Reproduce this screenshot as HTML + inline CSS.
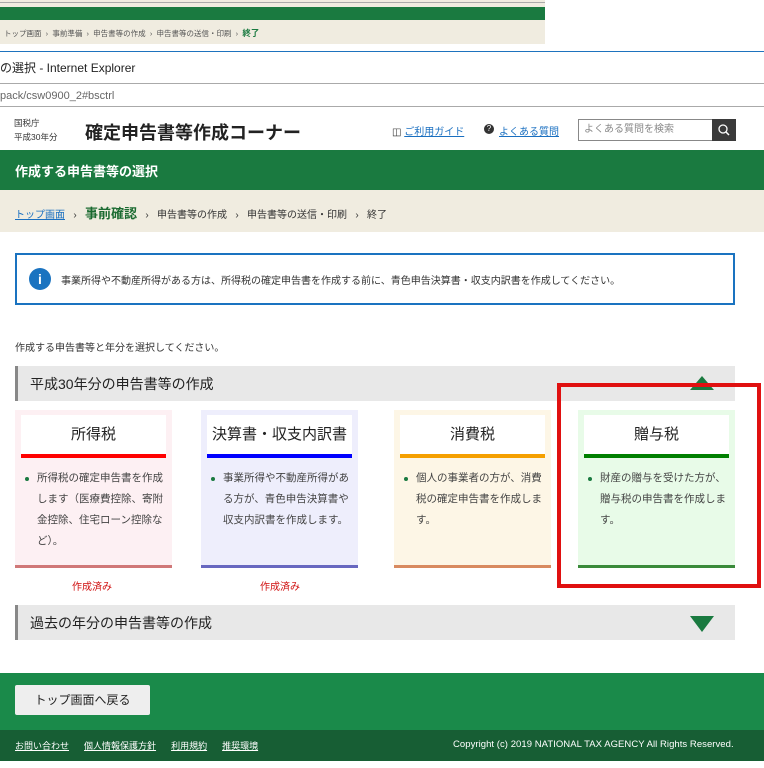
<!DOCTYPE html>
<html><head><meta charset="utf-8"><style>
*{margin:0;padding:0;box-sizing:border-box}
body{width:764px;height:768px;position:relative;background:#fff;font-family:"Liberation Sans","Noto Sans CJK JP",sans-serif;color:#333;overflow:hidden}
.a{position:absolute;white-space:nowrap}
.card{position:absolute;top:410px;width:157px;height:158px}
.card .t{position:absolute;left:6px;top:5px;width:145px;height:40px;background:#fff;text-align:center;font-size:15px;line-height:40px;color:#222}
.card .bar{position:absolute;left:6px;top:44px;width:145px;height:4px}
.card .d{position:absolute;left:10px;top:58px;width:140px;font-size:10.5px;line-height:21px;color:#444;padding-left:12px;white-space:normal}
.card .d:before{content:"";position:absolute;left:0;top:9px;width:4px;height:4px;border-radius:2px;background:#1a7a40}
.card .bt{position:absolute;left:0;bottom:0;width:157px;height:3px}
.u{text-decoration:underline}
</style></head><body>
<div class="a" style="left:0;top:0;width:545px;height:44px;background:#f0ece0"></div>
<div class="a" style="left:0;top:2px;width:545px;height:1px;background:#aaa"></div>
<div class="a" style="left:0;top:7px;width:545px;height:13px;background:#1a7a40"></div>
<div class="a" style="left:4px;top:27px;font-size:7.5px;color:#555">トップ画面 &nbsp;›&nbsp; 事前準備 &nbsp;›&nbsp; 申告書等の作成 &nbsp;›&nbsp; 申告書等の送信・印刷 &nbsp;›&nbsp; <b style="color:#1a7a40;font-size:8.5px">終了</b></div>
<div class="a" style="left:0;top:51px;width:764px;height:1px;background:#1e73be"></div>
<div class="a" style="left:0;top:59px;font-size:12px;color:#222">の選択 - Internet Explorer</div>
<div class="a" style="left:0;top:83px;width:764px;height:1px;background:#aaa"></div>
<div class="a" style="left:0;top:90px;font-size:11px;color:#666">pack/csw0900_2#bsctrl</div>
<div class="a" style="left:0;top:106px;width:764px;height:1px;background:#aaa"></div>
<div class="a" style="left:14px;top:116px;font-size:8.5px;line-height:14px;color:#333">国税庁<br>平成30年分</div>
<div class="a" style="left:85px;top:119px;font-size:18px;font-weight:bold;color:#222">確定申告書等作成コーナー</div>
<div class="a" style="left:392px;top:123px;font-size:10px;color:#333">&#9707; <span class="u" style="color:#1a6fc0">ご利用ガイド</span></div>
<div class="a" style="left:484px;top:124px;width:10px;height:10px;border-radius:5px;background:#333;color:#fff;font-size:8px;line-height:10px;text-align:center">?</div>
<div class="a u" style="left:499px;top:123px;font-size:10px;color:#1a6fc0">よくある質問</div>
<div class="a" style="left:578px;top:119px;width:135px;height:22px;border:1px solid #888;font-size:10px;line-height:20px;color:#888;padding-left:5px">よくある質問を検索</div>
<div class="a" style="left:712px;top:119px;width:24px;height:22px;background:#3a3a3a"><svg width="24" height="22"><circle cx="11" cy="10" r="4" stroke="#fff" fill="none" stroke-width="1.3"/><line x1="14" y1="13" x2="17" y2="16" stroke="#fff" stroke-width="1.5"/></svg></div>
<div class="a" style="left:0;top:150px;width:764px;height:40px;background:#1a7a40"></div>
<div class="a" style="left:15px;top:161px;font-size:13px;font-weight:bold;color:#fff">作成する申告書等の選択</div>
<div class="a" style="left:0;top:190px;width:764px;height:42px;background:#f0ece0"></div>
<div class="a" style="left:15px;top:203px;font-size:10px;color:#333"><span class="u" style="color:#1a6fc0">トップ画面</span> &nbsp;&nbsp;›&nbsp;&nbsp; <b style="font-size:13px;color:#1a6a30">事前確認</b> &nbsp;&nbsp;›&nbsp;&nbsp; 申告書等の作成 &nbsp;&nbsp;›&nbsp;&nbsp; 申告書等の送信・印刷 &nbsp;&nbsp;›&nbsp;&nbsp; 終了</div>
<div class="a" style="left:15px;top:253px;width:720px;height:52px;border:2px solid #1a73c0"></div>
<div class="a" style="left:29px;top:268px;width:22px;height:22px;border-radius:11px;background:#1a73c0;color:#fff;font-size:14px;font-weight:bold;line-height:22px;text-align:center">i</div>
<div class="a" style="left:61px;top:272px;font-size:10px;color:#333">事業所得や不動産所得がある方は、所得税の確定申告書を作成する前に、青色申告決算書・収支内訳書を作成してください。</div>
<div class="a" style="left:15px;top:339px;font-size:10px;color:#333">作成する申告書等と年分を選択してください。</div>
<div class="a" style="left:15px;top:366px;width:720px;height:35px;background:#e8e8e8;border-left:3px solid #888"></div>
<div class="a" style="left:30px;top:374px;font-size:14px;color:#222">平成30年分の申告書等の作成</div>
<div class="a" style="left:690px;top:376px;width:0;height:0;border-left:12px solid transparent;border-right:12px solid transparent;border-bottom:14px solid #1a7a40"></div>
<div class="card" style="left:15px;background:#fdf0f3"><div class="t">所得税</div><div class="bar" style="background:#f00"></div><div class="d">所得税の確定申告書を作成します（医療費控除、寄附金控除、住宅ローン控除など）。</div><div class="bt" style="background:#d07878"></div></div>
<div class="card" style="left:201px;background:#eeeefc"><div class="t">決算書・収支内訳書</div><div class="bar" style="background:#00f"></div><div class="d">事業所得や不動産所得がある方が、青色申告決算書や収支内訳書を作成します。</div><div class="bt" style="background:#6868c0"></div></div>
<div class="card" style="left:394px;background:#fdf6e6"><div class="t">消費税</div><div class="bar" style="background:#f5a000"></div><div class="d">個人の事業者の方が、消費税の確定申告書を作成します。</div><div class="bt" style="background:#d88a60"></div></div>
<div class="card" style="left:578px;background:#e8fbe8"><div class="t">贈与税</div><div class="bar" style="background:#008000"></div><div class="d">財産の贈与を受けた方が、贈与税の申告書を作成します。</div><div class="bt" style="background:#3a8a3a"></div></div>
<div class="a" style="left:557px;top:383px;width:204px;height:205px;border:4px solid #e01010"></div>
<div class="a" style="left:72px;top:578px;font-size:10px;color:#d01010">作成済み</div>
<div class="a" style="left:260px;top:578px;font-size:10px;color:#d01010">作成済み</div>
<div class="a" style="left:15px;top:605px;width:720px;height:35px;background:#e8e8e8;border-left:3px solid #888"></div>
<div class="a" style="left:30px;top:613px;font-size:14px;color:#222">過去の年分の申告書等の作成</div>
<div class="a" style="left:690px;top:616px;width:0;height:0;border-left:12px solid transparent;border-right:12px solid transparent;border-top:16px solid #1a7a40"></div>
<div class="a" style="left:0;top:673px;width:764px;height:57px;background:#1a8a4a"></div>
<div class="a" style="left:15px;top:685px;width:135px;height:30px;background:#eee;border-radius:2px;font-size:12px;line-height:30px;text-align:center;color:#222">トップ画面へ戻る</div>
<div class="a" style="left:0;top:730px;width:764px;height:31px;background:#175e34"></div>
<div class="a" style="left:15px;top:739px;font-size:9px;color:#fff"><span class="u">お問い合わせ</span>&nbsp;&nbsp;&nbsp;&nbsp;&nbsp; <span class="u">個人情報保護方針</span>&nbsp;&nbsp;&nbsp;&nbsp;&nbsp; <span class="u">利用規約</span>&nbsp;&nbsp;&nbsp;&nbsp;&nbsp; <span class="u">推奨環境</span></div>
<div class="a" style="left:453px;top:739px;font-size:9.5px;color:#fff;letter-spacing:0.05px">Copyright (c) 2019 NATIONAL TAX AGENCY All Rights Reserved.</div>
</body></html>
